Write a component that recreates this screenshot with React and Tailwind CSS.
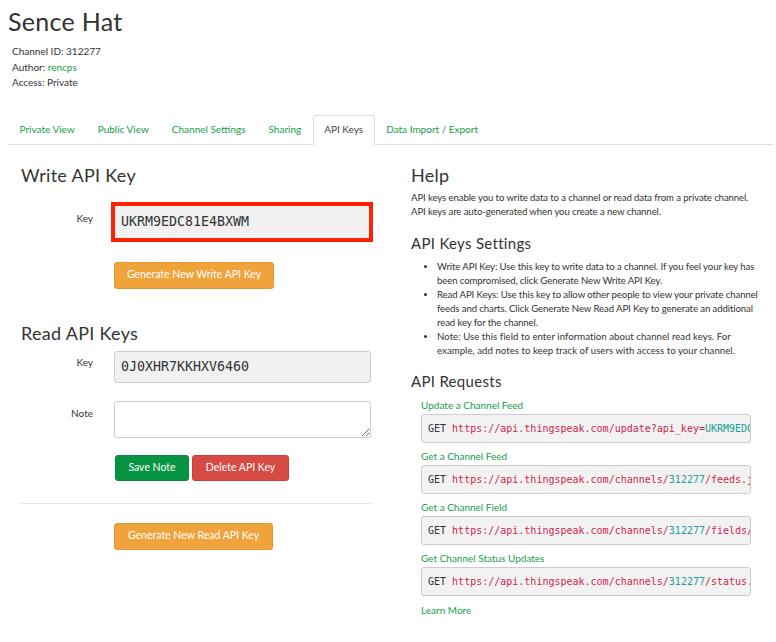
import React from 'react'

const TABS = ['Private View', 'Public View', 'Channel Settings', 'Sharing', 'API Keys', 'Data Import / Export']

const REQUESTS = [
  { label: 'Update a Channel Feed', url: 'https://api.thingspeak.com/update?api_key=', tail: 'UKRM9EDC', after: '' },
  { label: 'Get a Channel Feed', url: 'https://api.thingspeak.com/channels/', tail: '312277', after: '/feeds.j' },
  { label: 'Get a Channel Field', url: 'https://api.thingspeak.com/channels/', tail: '312277', after: '/fields/' },
  { label: 'Get Channel Status Updates', url: 'https://api.thingspeak.com/channels/', tail: '312277', after: '/status.' },
]

const sans = "font-['Lato','Open_Sans',sans-serif]"
const heading = "font-['Lato',sans-serif] text-[18px] leading-[22px] text-[#333] tracking-[0.3px]"
const subheading = "font-['Lato',sans-serif] text-[15px] leading-[22px] text-[#333] tracking-[0.3px]"
const mono = "font-['DejaVu_Sans_Mono','Liberation_Mono',monospace]"

export default function App() {
  return (
    <div className={`${sans} bg-white text-[#333] w-[776px] h-[642px] overflow-hidden pl-2 pr-[3px]`}>
      {/* Title + info */}
      <h1 className="font-['Lato',sans-serif] text-[25px] leading-[29px] mt-[7px] text-[#333] tracking-[0.3px]">Sence Hat</h1>
      <div className="mt-[8px] pl-1 text-[10px] leading-[15.5px]">
        <p>Channel ID: 312277</p>
        <p>Author: <span className="text-[#1a9c4b]">rencps</span></p>
        <p>Access: Private</p>
      </div>

      {/* Tabs */}
      <div className="mt-[24px] flex border-b border-[#ddd] text-[10px]">
        {TABS.map(t => (
          <div key={t}
            className={`h-[30px] -mb-px flex items-center px-[10.5px] rounded-t-[3px] border ${
              t === 'API Keys' ? 'border-[#ddd] border-b-white bg-white text-[#444]' : 'border-transparent text-[#1a9c4b]'
            }`}>
            {t}
          </div>
        ))}
      </div>

      <div className="flex">
        {/* Left column */}
        <div className="w-[390px] pl-[13px]">
          <h2 className={`${heading} mt-[19px]`}>Write API Key</h2>
          <div className="mt-[16px] flex">
            <label className="w-[72px] text-right pt-[9px] text-[10px] leading-[15px]">Key</label>
            <div className="ml-[18px] w-[262px] h-[40px] border-[4px] border-[#ff2200]">
              <div className="w-full h-full bg-[#f1f1f1] flex items-center pl-[6px]">
                <span className={`${mono} text-[13.3px] text-[#333]`}>UKRM9EDC81E4BXWM</span>
              </div>
            </div>
          </div>
          <button className="mt-[20px] ml-[93px] w-[160px] h-[27px] bg-[#f0a33a] border border-[#e29530] rounded-[3px] text-white text-[10.5px]">
            Generate New Write API Key
          </button>

          <h2 className={`${heading} mt-[33px]`}>Read API Keys</h2>
          <div className="mt-[7px] flex">
            <label className="w-[72px] text-right pt-[4px] text-[10px] leading-[15px]">Key</label>
            <div className="ml-[21px] w-[257px] h-[32px] bg-[#f1f1f1] border border-[#ccc] rounded-[3px] flex items-center pl-[6px]">
              <span className={`${mono} text-[13.3px] text-[#333]`}>0J0XHR7KKHXV6460</span>
            </div>
          </div>
          <div className="mt-[18px] flex">
            <label className="w-[72px] text-right pt-[5px] text-[10px] leading-[15px]">Note</label>
            <textarea className="ml-[21px] w-[257px] h-[37px] bg-white border border-[#ccc] rounded-[3px] resize-y" />
          </div>
          <div className="mt-[17px] ml-[94px] flex gap-[3px]">
            <button className="w-[74px] h-[26px] bg-[#069443] border border-[#058a3e] rounded-[3px] text-white text-[10.5px]">Save Note</button>
            <button className="w-[97px] h-[26px] bg-[#d64a43] border border-[#c9403a] rounded-[3px] text-white text-[10.5px]">Delete API Key</button>
          </div>
          <hr className="mt-[22px] w-[350px] border-[#e5e5e5]" />
          <button className="mt-[19px] ml-[93px] w-[159px] h-[27px] bg-[#f0a33a] border border-[#e29530] rounded-[3px] text-white text-[10.5px]">
            Generate New Read API Key
          </button>
        </div>

        {/* Right column */}
        <div className="w-[365px] pl-[13px]">
          <h2 className={`${heading} mt-[19px]`}>Help</h2>
          <p className="mt-[5px] text-[9.6px] leading-[14px] tracking-[-0.1px]">
            API keys enable you to write data to a channel or read data from a private channel. API keys are auto-generated when you create a new channel.
          </p>
          <h3 className={`${subheading} mt-[13px]`}>API Keys Settings</h3>
          <ul className="mt-[6px] pl-[26px] list-disc text-[9.6px] leading-[14px] tracking-[-0.1px] marker:text-[#333]">
            <li>Write API Key: Use this key to write data to a channel. If you feel your key has been compromised, click Generate New Write API Key.</li>
            <li>Read API Keys: Use this key to allow other people to view your private channel feeds and charts. Click Generate New Read API Key to generate an additional read key for the channel.</li>
            <li className="tracking-[0.05px]">Note: Use this field to enter information about channel read keys. For example, add notes to keep track of users with access to your channel.</li>
          </ul>
          <h3 className={`${subheading} mt-[12px]`}>API Requests</h3>
          <div className="pl-[10px]">
            {REQUESTS.map(r => (
              <div key={r.label}>
                <p className="mt-[6px] text-[10px] leading-[14px] text-[#1a9c4b]">{r.label}</p>
                <div className={`${mono} mt-[2px] w-[330px] h-[29px] bg-[#f2f2f2] border border-[#ccc] rounded-[3px] flex items-center pl-[6px] overflow-hidden whitespace-nowrap text-[10px]`}>
                  <span className="text-[#333]">GET&nbsp;</span>
                  <span className="text-[#d0264f]">{r.url}</span>
                  <span className="text-[#1a9e96]">{r.tail}</span>
                  <span className="text-[#d0264f]">{r.after}</span>
                </div>
              </div>
            ))}
            <p className="mt-[7px] text-[10px] leading-[14px] text-[#1a9c4b]">Learn More</p>
          </div>
        </div>
      </div>
    </div>
  )
}
